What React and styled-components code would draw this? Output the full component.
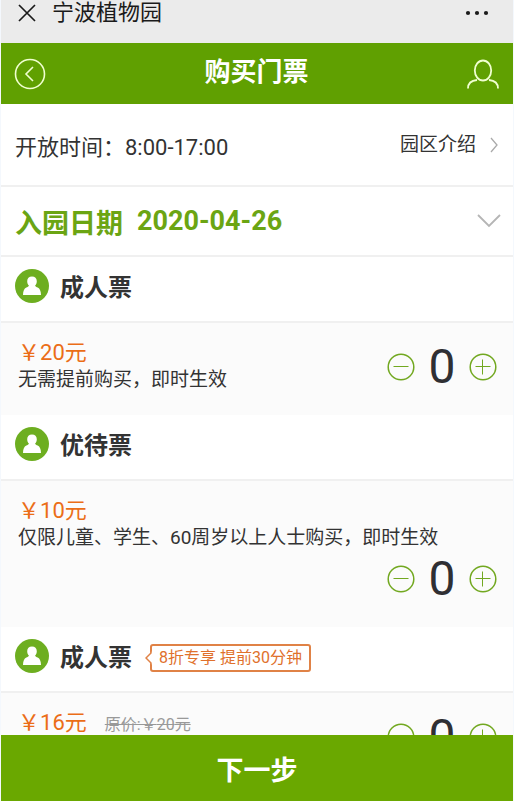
import React, { useState } from 'react';
import styled, { createGlobalStyle } from 'styled-components';

const tickets = [
  { id: 'adult', name: '成人票', price: 20, note: '无需提前购买，即时生效' },
  {
    id: 'discount',
    name: '优待票',
    price: 10,
    note: '仅限儿童、学生、60周岁以上人士购买，即时生效',
  },
  {
    id: 'adult-advance',
    name: '成人票',
    price: 16,
    originalPrice: 20,
    tag: '8折专享 提前30分钟',
  },
];

const GlobalStyle = createGlobalStyle`
  * {
    box-sizing: border-box;
  }

  body {
    margin: 0;
    background-color: #f4f8fd;
    color: #333;
    font-family: Roboto, 'Noto Sans CJK SC', sans-serif;
  }

  button {
    padding: 0;
    border: 0;
    background: none;
    color: inherit;
    font-family: inherit;
    cursor: pointer;
  }
`;

const Page = styled.div`
  display: flex;
  flex-direction: column;
  height: 100vh;
  padding: 0 1px;
`;

const TopBar = styled.div`
  display: flex;
  align-items: center;
  flex-shrink: 0;
  padding: 0 24px 17px 16px;
  background-color: #ebebeb;
  color: #1a1a1a;
`;

const AppName = styled.span`
  flex: 1;
  margin-left: 15px;
  font-size: 22px;
  line-height: 26px;
`;

const IconButton = styled.button`
  display: flex;
`;

const Header = styled.header`
  display: flex;
  align-items: center;
  justify-content: space-between;
  flex-shrink: 0;
  height: 61px;
  padding: 0 14px 0 13px;
  background-color: #60a001;
  color: #f0ffd0;
`;

const Title = styled.h1`
  margin: 0;
  padding-bottom: 4px;
  color: #fff;
  font-size: 26px;
  line-height: 32px;
`;

const Content = styled.main`
  flex: 1;
  min-height: 0;
  overflow-y: auto;
  scrollbar-width: none;
  background-color: #fff;
`;

const InfoRow = styled.div`
  display: flex;
  align-items: center;
  justify-content: space-between;
  height: 83px;
  padding: 0 14px;
  border-bottom: 2px solid #f0f0f0;
  font-size: 22px;
`;

const IntroLink = styled.a`
  display: flex;
  align-items: center;
  gap: 14px;
  color: inherit;
  font-size: 19px;
  line-height: 28px;
  text-decoration: none;
`;

const DateRow = styled.button`
  display: flex;
  align-items: center;
  width: 100%;
  height: 70px;

  && {
    padding: 0 12px 0 14px;
    border-bottom: 2px solid #f0f0f0;
    color: #6ba513;
  }

  font-size: 27px;
  font-weight: bold;
`;

const DateValue = styled.span`
  flex: 1;
  margin-left: 14px;
  text-align: left;
`;

const TicketHead = styled.div`
  display: flex;
  align-items: center;
  padding: 12px 14px 14px;
  border-bottom: 2px solid #f0f0f0;
`;

const TicketIcon = styled.svg`
  flex-shrink: 0;
  margin-bottom: 4px;
`;

const TicketName = styled.h2`
  margin: 0 0 0 11px;
  font-size: 24px;
  line-height: 38px;
`;

const Tag = styled.span`
  position: relative;
  margin-left: 18px;
  padding: 0 7px;
  border: 2px solid #e08246;
  border-radius: 3px;
  color: #e0712c;
  font-size: 16px;
  line-height: 24px;
`;

const TagArrow = styled.svg`
  position: absolute;
  top: 5px;
  left: -7px;
`;

const TicketBody = styled.div`
  display: flex;
  flex-wrap: wrap;
  align-items: flex-start;
  padding: 16px 16px 22px 17px;
  background-color: #fbfbfb;
`;

const Price = styled.div`
  color: #eb6d17;
  font-size: 22px;
  line-height: 28px;
`;

const OriginalPrice = styled.del`
  margin-left: 18px;
  color: #999;
  font-size: 16px;
`;

const Note = styled.div`
  font-size: 19px;
  line-height: 26px;
`;

const Counter = styled.div`
  display: flex;
  align-items: center;
  gap: 13px;
  margin: 4px 0 2px auto;
  color: #72a820;
`;

const Count = styled.output`
  min-width: 28px;
  color: #2f2f33;
  font-size: 48px;
  line-height: 48px;
  text-align: center;
`;

const NextButton = styled.button`
  flex-shrink: 0;
  height: 66px;

  && {
    background-color: #6aa800;
    color: #fff;
  }

  font-size: 27px;
  font-weight: bold;
`;

const CloseIcon = () => (
  <svg width='20' height='20' fill='none' stroke='currentColor' strokeWidth='1.7'>
    <path d='M2 2l16 16M18 2L2 18' />
  </svg>
);

const MoreIcon = () => (
  <svg width='24' height='6' fill='currentColor'>
    <circle cx='3' cy='3' r='2.1' />
    <circle cx='12' cy='3' r='2.1' />
    <circle cx='21' cy='3' r='2.1' />
  </svg>
);

const BackIcon = () => (
  <svg width='32' height='32' fill='none' stroke='currentColor' strokeWidth='1.6'>
    <circle cx='16' cy='16' r='14.5' />
    <path d='M19 9l-7 7 7 7' />
  </svg>
);

const UserIcon = () => (
  <svg width='32' height='32' fill='none' stroke='currentColor' strokeWidth='1.8'>
    <ellipse cx='16' cy='12.5' rx='8.2' ry='10' />
    <path d='M1 30.500c0-5 3-8 9-8.500M31 30.500c0-5-3-8-9-8.500' />
  </svg>
);

const PersonIcon = () => (
  <TicketIcon width='34' height='34'>
    <circle cx='17' cy='17' r='17' fill='#6dae20' />
    <path
      fill='#fff'
      d='M17 7.500c3 0 4.800 2 4.800 4.700 0 1.800-.6 3.300-1.700 4.300.3 1.300 1.500 1.500 2.600 2.100 2.200 1.200 3.200 3.400 3.300 7.400H8c.1-4 1.100-6.200 3.300-7.400 1.100-.6 2.300-.8 2.600-2.100-1.100-1-1.700-2.500-1.700-4.300 0-2.700 1.800-4.700 4.800-4.700z'
    />
  </TicketIcon>
);

const CountIcon = ({ plus }) => (
  <svg width='28' height='28' fill='none' stroke='currentColor'>
    <circle cx='14' cy='14' r='12.800' strokeWidth='1.5' />
    <path d={plus ? 'M6.500 13.500h15M13.500 6.500v15' : 'M6.500 13.500h15'} />
  </svg>
);

const Ticket = ({ ticket, count, onChange }) => (
  <section>
    <TicketHead>
      <PersonIcon />
      <TicketName>{ticket.name}</TicketName>
      {ticket.tag && (
        <Tag>
          <TagArrow width='7' height='14'>
            <path d='M7 0v14L1 7z' fill='#fff' />
            <path d='M6 0v2L1 7l5 5v2' fill='none' stroke='#e08246' strokeWidth='1.5' />
          </TagArrow>
          {ticket.tag}
        </Tag>
      )}
    </TicketHead>
    <TicketBody>
      <div>
        <Price>
          ￥{ticket.price}元
          {ticket.originalPrice && (
            <OriginalPrice>原价:￥{ticket.originalPrice}元</OriginalPrice>
          )}
        </Price>
        {ticket.note && <Note>{ticket.note}</Note>}
      </div>
      <Counter>
        <IconButton aria-label='减少' onClick={() => onChange(Math.max(0, count - 1))}>
          <CountIcon />
        </IconButton>
        <Count>{count}</Count>
        <IconButton aria-label='增加' onClick={() => onChange(count + 1)}>
          <CountIcon plus />
        </IconButton>
      </Counter>
    </TicketBody>
  </section>
);

const App = () => {
  const [counts, setCounts] = useState({});

  return (
    <Page>
      <GlobalStyle />
      <TopBar>
        <IconButton aria-label='关闭'><CloseIcon /></IconButton>
        <AppName>宁波植物园</AppName>
        <IconButton aria-label='更多'><MoreIcon /></IconButton>
      </TopBar>
      <Header>
        <IconButton aria-label='返回'><BackIcon /></IconButton>
        <Title>购买门票</Title>
        <IconButton aria-label='我的'><UserIcon /></IconButton>
      </Header>
      <Content>
        <InfoRow>
          <span>开放时间：8:00-17:00</span>
          <IntroLink href='#intro'>
            园区介绍
            <svg width='9' height='16' fill='none' stroke='#aaa' strokeWidth='1.3'>
              <path d='M1 1l6 7-6 7' />
            </svg>
          </IntroLink>
        </InfoRow>
        <DateRow>
          <span>入园日期</span>
          <DateValue>2020-04-26</DateValue>
          <svg width='24' height='14' fill='none' stroke='#b5b5b5' strokeWidth='1.8'>
            <path d='M1 1l11 11L23 1' />
          </svg>
        </DateRow>
        {tickets.map(ticket =>
          <Ticket
            key={ticket.id}
            ticket={ticket}
            count={counts[ticket.id] || 0}
            onChange={count => setCounts({ ...counts, [ticket.id]: count })}
          />
        )}
      </Content>
      <NextButton>下一步</NextButton>
    </Page>
  );
};

export default App;
